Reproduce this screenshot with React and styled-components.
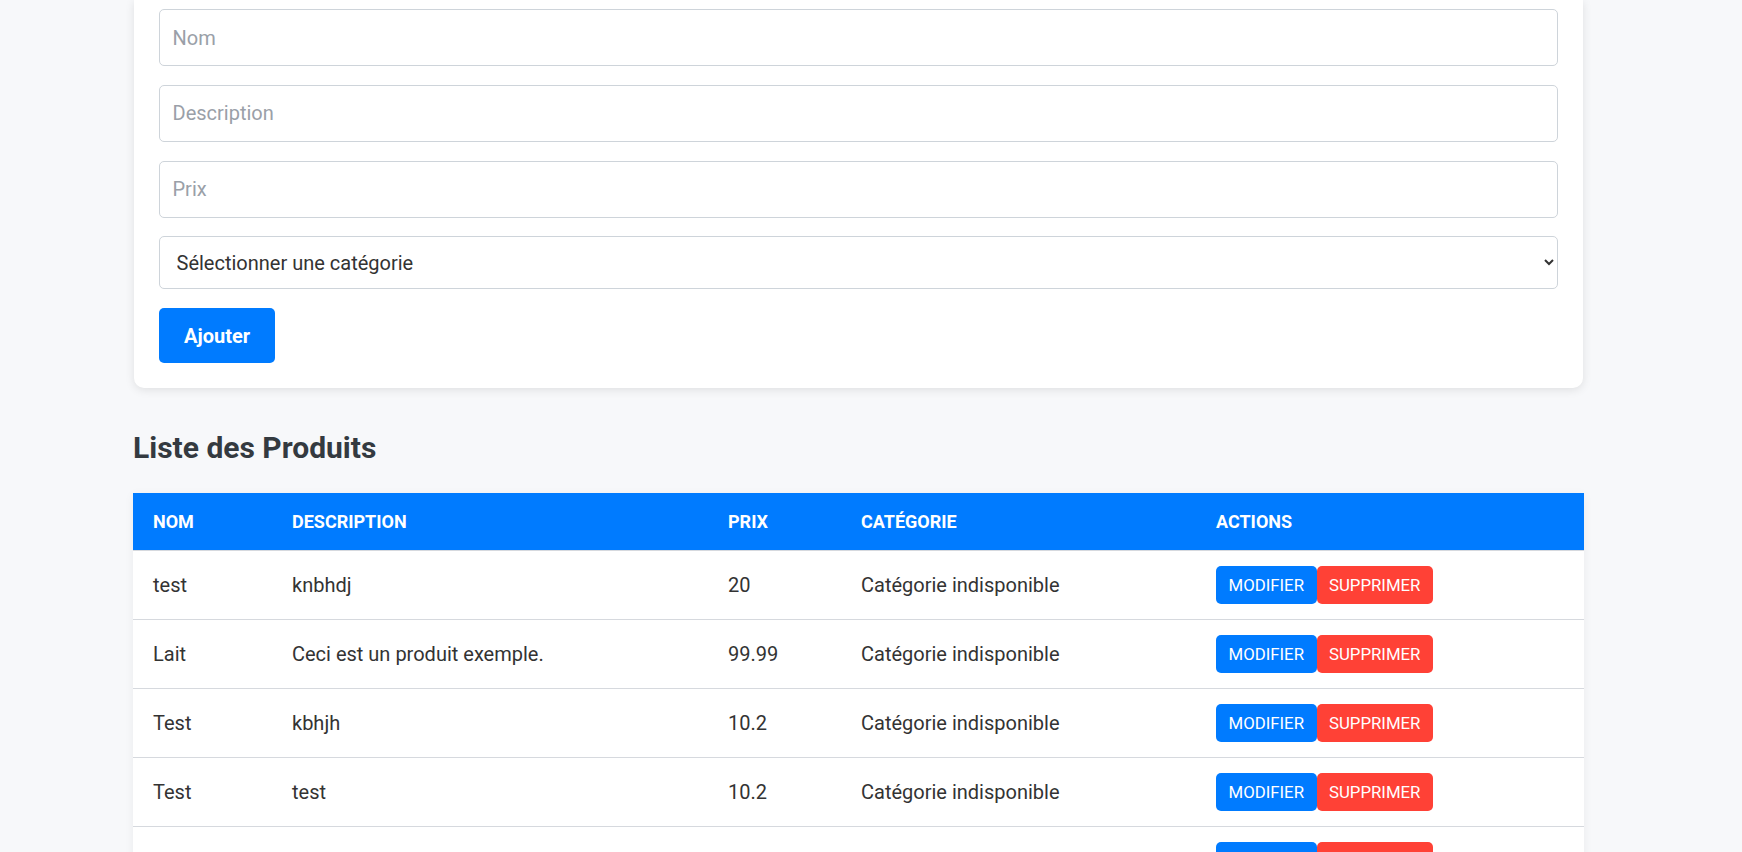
import React from "react";
import styled, { createGlobalStyle } from "styled-components";

const GlobalStyle = createGlobalStyle`
  html {
    overflow: hidden;
  }
  body {
    margin: 0;
    background: #f7f8fa;
    font-family: Roboto, "Liberation Sans", Arial, sans-serif;
    color: #333;
  }
`;

const products = [
  { id: 1, name: "test", description: "knbhdj", price: "20" },
  { id: 2, name: "Lait", description: "Ceci est un produit exemple.", price: "99.99" },
  { id: 3, name: "Test", description: "kbhjh", price: "10.2" },
  { id: 4, name: "Test", description: "test", price: "10.2" },
  { id: 5, name: "Pain", description: "Pain complet", price: "2.5" },
];

const columns = [
  { label: "Nom", width: 139 },
  { label: "Description", width: 436 },
  { label: "Prix", width: 133 },
  { label: "Catégorie", width: 355 },
  { label: "Actions", width: 388 },
];

const App = () => {
  return (
    <>
      <GlobalStyle />
      <Page>
        <Container>
          <FormCard>
            <TextInput type="text" placeholder="Nom" />
            <TextInput type="text" placeholder="Description" />
            <TextInput type="text" placeholder="Prix" />
            <CategorySelect defaultValue="">
              <option value="">Sélectionner une catégorie</option>
            </CategorySelect>
            <AddButton type="button">Ajouter</AddButton>
          </FormCard>

          <SectionTitle>Liste des Produits</SectionTitle>

          <ProductTable>
            <colgroup>
              {columns.map((col) => (
                <col key={col.label} style={{ width: col.width }} />
              ))}
            </colgroup>
            <thead>
              <tr>
                {columns.map((col) => (
                  <HeadCell key={col.label}>{col.label}</HeadCell>
                ))}
              </tr>
            </thead>
            <tbody>
              {products.map((product) => (
                <tr key={product.id}>
                  <Cell>{product.name}</Cell>
                  <Cell>{product.description}</Cell>
                  <Cell>{product.price}</Cell>
                  <Cell>Catégorie indisponible</Cell>
                  <Cell>
                    <Actions>
                      <ActionButton $variant="edit">Modifier</ActionButton>
                      <ActionButton $variant="delete">Supprimer</ActionButton>
                    </Actions>
                  </Cell>
                </tr>
              ))}
            </tbody>
          </ProductTable>
        </Container>
      </Page>
    </>
  );
};

export default App;

const Page = styled.div`
  padding-left: 133px;
`;

const Container = styled.div`
  width: 1451px;
`;

const FormCard = styled.div`
  display: flex;
  flex-direction: column;
  align-items: flex-start;
  gap: 18.75px;
  margin: 0 1px;
  padding: 9px 25px 25px;
  background: #fff;
  border-radius: 0 0 10px 10px;
  box-shadow: 0 2px 10px rgba(0, 0, 0, 0.1);
`;

const TextInput = styled.input`
  box-sizing: border-box;
  width: 100%;
  height: 57px;
  padding: 0 12.5px;
  border: 1px solid #ced4da;
  border-radius: 5px;
  font-family: inherit;
  font-size: 20px;
  color: #333;
  background: #fff;
  outline: none;

  &::placeholder {
    color: #9aa0a8;
  }
`;

const CategorySelect = styled.select`
  box-sizing: border-box;
  width: 100%;
  height: 53px;
  padding: 0 12.5px;
  border: 1px solid #ced4da;
  border-radius: 5px;
  font-family: inherit;
  font-size: 20px;
  color: #333;
  background: #fff;
  outline: none;
`;

const AddButton = styled.button`
  height: 55px;
  padding: 0 25px;
  border: none;
  border-radius: 5px;
  background: #007bff;
  color: #fff;
  font-family: inherit;
  font-size: 20px;
  font-weight: 700;
  cursor: pointer;
`;

const SectionTitle = styled.h2`
  margin: 42px 0 27px;
  font-size: 30px;
  line-height: 36px;
  font-weight: 700;
  color: #343a40;
`;

const ProductTable = styled.table`
  width: 100%;
  table-layout: fixed;
  border-collapse: collapse;
  background: #fff;
  box-shadow: 0 2px 10px rgba(0, 0, 0, 0.05);
`;

const HeadCell = styled.th`
  padding: 15px 20px;
  background: #007bff;
  color: #fff;
  text-align: left;
  text-transform: uppercase;
  font-size: 18px;
  line-height: 27px;
  font-weight: 700;
  border-bottom: 1px solid #d6d9de;
`;

const Cell = styled.td`
  padding: 15px 20px;
  font-size: 20px;
  line-height: 30px;
  color: #333;
  vertical-align: middle;
  border-bottom: 1px solid #d6d9de;
`;

const Actions = styled.div`
  display: flex;
`;

const ActionButton = styled.button`
  height: 38px;
  padding: 0 12.5px;
  border: none;
  border-radius: 5px;
  background: ${(props) => (props.$variant === "delete" ? "#ff4136" : "#007bff")};
  color: #fff;
  font-family: inherit;
  font-size: 16.8px;
  text-transform: uppercase;
  cursor: pointer;
`;
